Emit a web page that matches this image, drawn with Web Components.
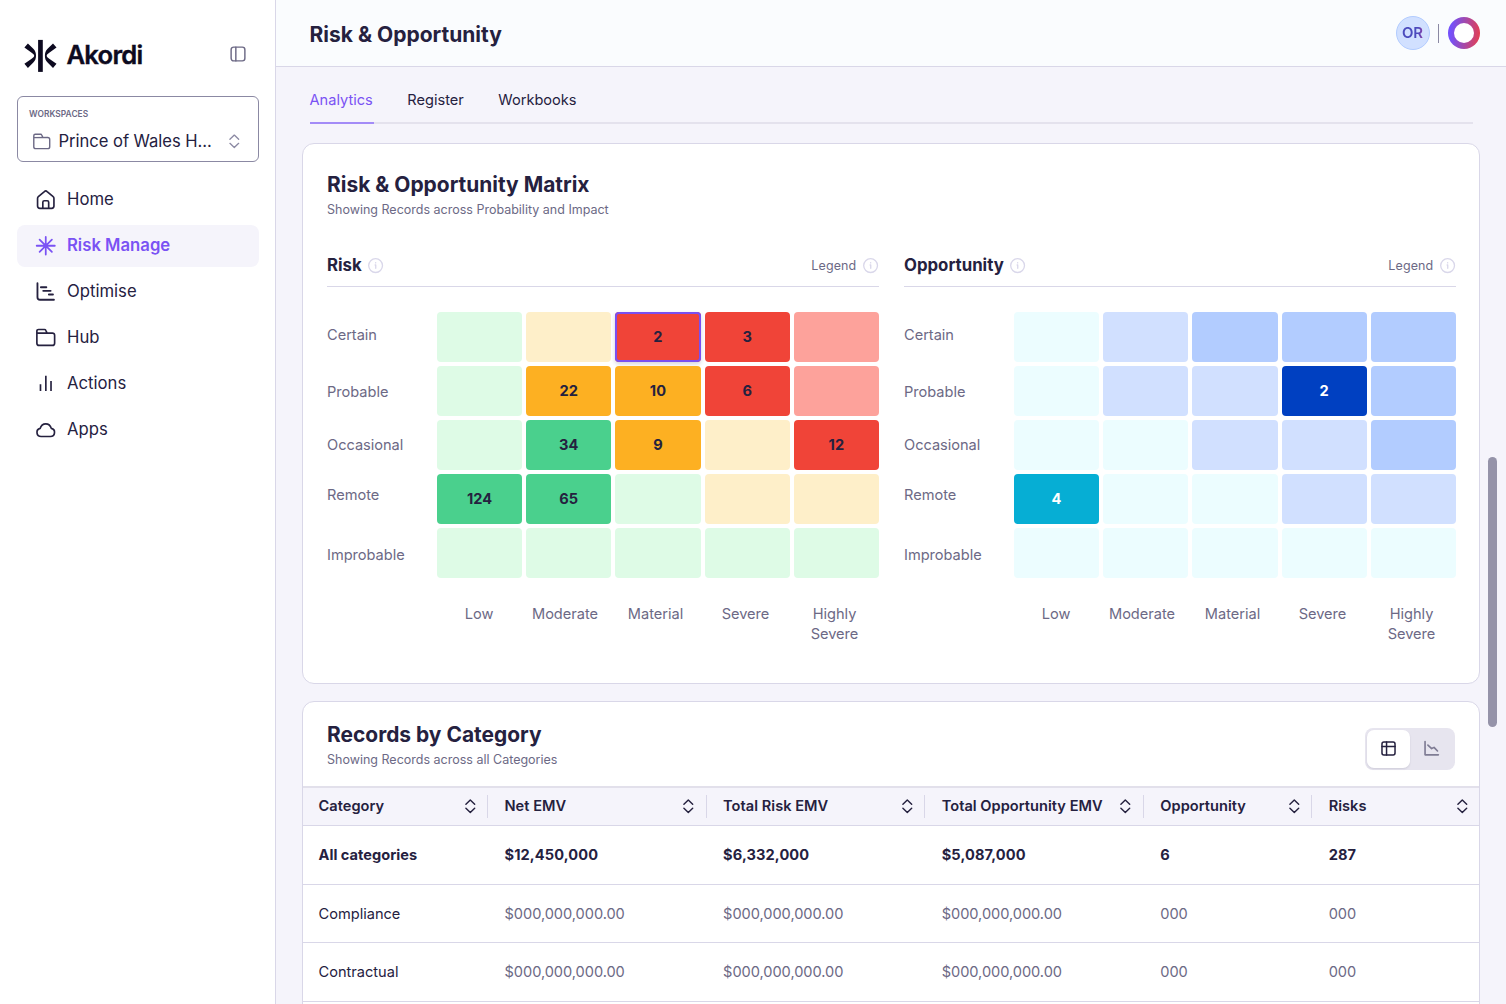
<!DOCTYPE html>
<html lang="en">
<head>
<meta charset="utf-8">
<title>Risk &amp; Opportunity</title>
<style>
    html, body {
        margin: 0;
        height: 100%;
        overflow: hidden;
    }
    body {
        --ink: #25213f;
        --muted: #6c6985;
        --line: #d9d7e8;
        --surface: #f5f4fb;
        --accent: #7a52f4;
        font-family: Inter, "Liberation Sans", sans-serif;
        font-size: 14.6px;
        color: var(--ink);
        background: var(--surface);
    }
</style>
</head>
<body>
<ak-app>
    <ak-sidebar slot="sidebar">
        <ak-workspace label="WORKSPACES">Prince of Wales H...</ak-workspace>
        <ak-nav-item icon="home">Home</ak-nav-item>
        <ak-nav-item icon="spark" active>Risk Manage</ak-nav-item>
        <ak-nav-item icon="gantt">Optimise</ak-nav-item>
        <ak-nav-item icon="folder">Hub</ak-nav-item>
        <ak-nav-item icon="bars">Actions</ak-nav-item>
        <ak-nav-item icon="cloud">Apps</ak-nav-item>
    </ak-sidebar>
    <ak-topbar slot="topbar" initials="OR">Risk &amp; Opportunity</ak-topbar>
    <ak-tabs>
        <ak-tab active>Analytics</ak-tab>
        <ak-tab>Register</ak-tab>
        <ak-tab>Workbooks</ak-tab>
    </ak-tabs>
    <ak-card class="matrix" heading="Risk &amp; Opportunity Matrix" sub="Showing Records across Probability and Impact">
        <ak-matrix heading="Risk" kind="risk"></ak-matrix>
        <ak-matrix heading="Opportunity" kind="opportunity"></ak-matrix>
    </ak-card>
    <ak-card class="records" heading="Records by Category" sub="Showing Records across all Categories" flush>
        <ak-view-toggle slot="action"></ak-view-toggle>
        <ak-table></ak-table>
    </ak-card>
</ak-app>

<script>
class BaseElement extends HTMLElement {
    constructor() {
        super();
        this.attachShadow({ mode: "open" });
    }

    connectedCallback() {
        this.shadowRoot.innerHTML = this.render();
    }
}

const ICONS = {
    home: `<path d="M1.6 8.6c0-.7.3-1.3.8-1.7L8.6 1.6a2.1 2.1 0 0 1 2.8 0l6.200 5.300c.5.4.8 1 .8 1.700v7.900c0 1.400-.9 2.300-2.300 2.300H3.900c-1.400 0-2.300-.9-2.300-2.300z"/><path d="M7 18.700v-6.200c0-.9.6-1.500 1.500-1.500h3c.9 0 1.500.6 1.500 1.500v6.200"/>`,
    spark: `<path d="M10 .9v18.2M.7 10h18.6M3.7 3.7l12.6 12.6M16.3 3.7 3.7 16.3" stroke-width="1.8"/>`,
    gantt: `<path d="M1.5 1.2v14.4a2.6 2.6 0 0 0 2.6 2.6h14.3M5 5.4h5.6M7.4 9.1h7.6M13.2 12.8h4.2" stroke-width="1.9"/>`,
    folder: `<path d="M.9 5.8V3.2c0-1 .7-1.7 1.7-1.7h6.1c.6 0 1.1.3 1.3.8l1 2.2M.9 5.3v10.3c0 1.4.9 2.3 2.3 2.3h13.6c1.4 0 2.3-.9 2.3-2.3V7.5c0-1.4-.9-2.3-2.3-2.3z"/>`,
    bars: `<path d="M4.6 10.5v7M10.1 1.8v15.7M15.4 7.1v10.4" stroke-linecap="butt"/>`,
    cloud: `<path d="M5.2 16.9a4.2 4.2 0 0 1-.9-8.3C5.1 5.8 7.3 3.9 10 3.9s4.9 1.9 5.7 4.7a4.2 4.2 0 0 1-.9 8.3z"/>`,
    panel: `<rect x="1.4" y="1.4" width="17.2" height="17.2" rx="3.2"/><path d="M7.3 1.4v17.2"/>`,
    sort: `<path d="m4 7.2 6-5.7 6 5.7M4 12.8l6 5.7 6-5.7"/>`,
    info: `<circle cx="10" cy="10" r="9.1"/><path d="M9.4 9.2h.8v4.3M10.1 6v.5"/>`,
    grid: `<rect x="1.3" y="1.3" width="17.4" height="17.4" rx="2.6"/><path d="M1.3 7.2h17.4M7.4 1.3v17.4"/>`,
    trend: `<path d="M1.4.8v17.6h17.8M5.2 5.4l5 4.7 3.2-1.6 4.6 4.8"/>`
};

class AkIcon extends BaseElement {
    render() {
        const size = this.getAttribute("size") || 20;
        const weight = this.getAttribute("weight") || 1.6;
        return `
        <style>
          :host { display: block; flex: none; width: ${size}px; height: ${size}px; }
          svg { display: block; overflow: visible; }
        </style>
        <svg width="${size}" height="${size}" viewBox="0 0 20 20" fill="none" stroke="currentColor"
             stroke-width="${weight}" stroke-linecap="round" stroke-linejoin="round">${ICONS[this.getAttribute("name")]}</svg>`;
    }
}

class AkApp extends BaseElement {
    render() {
        return `
        <style>
          :host { display: grid; grid-template-columns: 276px 1fr; height: 100vh; }
          .main { display: flex; flex-direction: column; min-width: 0; overflow: hidden; }
          .scroll { display: flex; flex: 1; min-height: 0; overflow: hidden; }
          .content {
            box-sizing: border-box;
            width: 1204.5px;
            padding-left: 26px;
          }
          .thumb {
            width: 9px;
            height: 270px;
            margin: 390px 0 0 7.5px;
            border-radius: 5px;
            background: #9593a9;
          }
        </style>
        <slot name="sidebar"></slot>
        <div class="main">
          <slot name="topbar"></slot>
          <div class="scroll">
            <div class="content"><slot></slot></div>
            <div class="thumb"></div>
          </div>
        </div>`;
    }
}

class AkSidebar extends BaseElement {
    render() {
        return `
        <style>
          :host {
            display: block;
            box-sizing: border-box;
            padding: 39px 16px 0;
            background: #fff;
            border-right: 1px solid var(--line);
          }
          .brand {
            display: flex;
            align-items: center;
            height: 33px;
            margin-bottom: 24px;
            padding: 0 12.8px 0 8px;
            color: #0d0a20;
          }
          .name {
            flex: 1;
            margin: -3px 0 0 9.5px;
            font-size: 25.6px;
            font-weight: 600;
            letter-spacing: -0.75px;
            -webkit-text-stroke: 0.4px;
          }
          ak-icon { color: #6c6985; margin-top: -3px; }
          nav { display: flex; flex-direction: column; gap: 4px; }
        </style>
        <div class="brand">
          <svg width="33" height="33" viewBox="0 0 33 33" fill="currentColor">
            <path d="M14.1.9h4.7v32h-4.7z"/>
            <path id="arm" d="M3.900 4.500 9.300 9.800C11.300 11.800 12 14.200 12 16.700S11.300 21.600 9.300 23.600L3.900 28.900.4 24.800 7.300 19.900C9.300 18.500 10.200 17.800 10.200 16.700S9.300 14.900 7.300 13.500L.4 8.600z"/>
            <use href="#arm" transform="matrix(-1 0 0 1 32.900 0)"/>
          </svg>
          <span class="name">Akordi</span>
          <ak-icon name="panel" size="16" weight="1.8"></ak-icon>
        </div>
        <nav><slot></slot></nav>`;
    }
}

class AkWorkspace extends BaseElement {
    render() {
        return `
        <style>
          :host {
            display: block;
            box-sizing: border-box;
            height: 66px;
            margin: 0 0 13px 0.5px;
            padding: 11.5px 16px 0 11.5px;
            border: 1px solid #8b89a3;
            border-radius: 6px;
          }
          .label { font-size: 8.4px; line-height: 10px; font-weight: 600; letter-spacing: 0.05px; color: var(--muted); }
          .row { display: flex; align-items: center; margin-top: 11px; padding-left: 3.5px; line-height: 24px; font-size: 16.6px; }
          .row span { flex: 1; margin: -1px 0 0 8.5px; letter-spacing: -0.04px; }
          .folder { color: #6c6985; margin-top: 1px; }
          .sort { color: #8b89a3; margin-top: 1px; }
        </style>
        <div class="label">${this.getAttribute("label")}</div>
        <div class="row">
          <ak-icon class="folder" name="folder" size="17.5" weight="1.6"></ak-icon>
          <span><slot></slot></span>
          <ak-icon class="sort" name="sort" size="14.6" weight="1.8"></ak-icon>
        </div>`;
    }
}

class AkNavItem extends BaseElement {
    render() {
        return `
        <style>
          :host {
            display: flex;
            align-items: center;
            gap: 11.2px;
            height: 42px;
            margin-left: 0.5px;
            padding-left: 19.8px;
            border-radius: 8px;
            font-size: 16.7px;
          }
          :host([active]) { background: var(--surface); color: var(--accent); font-weight: 600; }
          span { margin-top: -3px; }
        </style>
        <ak-icon name="${this.getAttribute("icon")}" size="19.5" weight="1.7"></ak-icon>
        <span><slot></slot></span>`;
    }
}

class AkTopbar extends BaseElement {
    render() {
        return `
        <style>
          :host {
            display: flex;
            align-items: center;
            box-sizing: border-box;
            flex: none;
            height: 67px;
            padding: 0 26px 0 33.5px;
            background: #fafcfe;
            border-bottom: 1px solid var(--line);
          }
          h1 { flex: 1; margin: 2px 0 0; font-size: 21px; font-weight: 700; }
          .avatar {
            display: grid;
            place-items: center;
            box-sizing: border-box;
            width: 34px;
            height: 34px;
            margin-top: 0.5px;
            border: 1px solid #b2ccff;
            border-radius: 50%;
            background: #d1e0ff;
            font-size: 14.9px;
            font-weight: 600;
          }
          .avatar span {
            color: transparent;
            background: linear-gradient(90deg, #4b4bbd 75%, #8a3fa8);
            background-clip: text;
          }
          .rule { width: 1px; height: 19px; margin: 0 9.5px 0 8px; background: #8b89a3; }
          .ring {
            box-sizing: border-box;
            width: 32px;
            height: 32px;
            margin-top: 0.5px;
            padding: 6px;
            border-radius: 50%;
            background: linear-gradient(95deg, #7450fa 12%, #9a4bb8 45%, #e23f55 95%);
          }
          .ring::before { content: ""; display: block; height: 20px; border-radius: 50%; background: #fff; }
        </style>
        <h1><slot></slot></h1>
        <div class="avatar"><span>${this.getAttribute("initials")}</span></div>
        <div class="rule"></div>
        <div class="ring"></div>`;
    }
}

class AkTabs extends BaseElement {
    render() {
        return `
        <style>
          :host {
            display: flex;
            gap: 33px;
            height: 55px;
            margin: 0 7.5px 19px;
            border-bottom: 2px solid #e4e2ed;
          }
        </style>
        <slot></slot>`;
    }
}

class AkTab extends BaseElement {
    render() {
        return `
        <style>
          :host { display: block; height: 55px; padding-right: 1.5px; line-height: 66px; }
          :host([active]) { color: var(--accent); border-bottom: 2px solid #a38bf7; }
        </style>
        <slot></slot>`;
    }
}

class AkCard extends BaseElement {
    render() {
        return `
        <style>
          :host {
            display: block;
            box-sizing: border-box;
            width: 1178px;
            background: #fff;
            border: 1px solid var(--line);
            border-radius: 12px;
          }
          :host(.matrix) { height: 541px; margin-bottom: 17px; }
          :host(.records) { height: 420px; overflow: hidden; }
          header { display: flex; justify-content: space-between; padding: 28px 24px 0; }
          :host([flush]) header { padding-top: 20px; height: 64px; }
          h2 { margin: 0; font-size: 20.95px; line-height: 26px; font-weight: 700; }
          p { margin: 3px 0 0; font-size: 12.5px; line-height: 18px; color: var(--muted); }
          .body { display: grid; grid-template-columns: 552px 552px; gap: 25px; padding: 26px 24px 0; }
          :host([flush]) .body { display: block; padding: 0; }
        </style>
        <header>
          <div>
            <h2>${this.getAttribute("heading").replace("&", "&amp;")}</h2>
            <p>${this.getAttribute("sub")}</p>
          </div>
          <slot name="action"></slot>
        </header>
        <div class="body"><slot></slot></div>`;
    }
}

// lower case letters are the empty tints, [letter, n] is a filled cell with its count
const MATRIX = {
    risk: {
        colors: { g: "#defbe6", y: "#feefc9", r: "#fda29b", G: "#4ad08d", Y: "#fdb022", R: "#f04438" },
        rows: [
            ["g", "y", ["R", 2, "selected"], ["R", 3], "r"],
            ["g", ["Y", 22], ["Y", 10], ["R", 6], "r"],
            ["g", ["G", 34], ["Y", 9], "y", ["R", 12]],
            [["G", 124], ["G", 65], "g", "y", "y"],
            ["g", "g", "g", "g", "g"]
        ]
    },
    opportunity: {
        colors: { c: "#ecfdff", b: "#d1e0ff", d: "#b2ccff", B: "#0040c1", C: "#06aed4" },
        rows: [
            ["c", "b", "d", "d", "d"],
            ["c", "b", "b", ["B", 2, "light"], "d"],
            ["c", "c", "b", "b", "d"],
            [["C", 4, "light"], "c", "c", "b", "b"],
            ["c", "c", "c", "c", "c"]
        ]
    }
};
const PROBABILITY = ["Certain", "Probable", "Occasional", "Remote", "Improbable"];
const IMPACT = ["Low", "Moderate", "Material", "Severe", "Highly<br>Severe"];

class AkMatrix extends BaseElement {
    renderCell(cell, colors) {
        const [key, count = "", state = ""] = [].concat(cell);
        return `<div class="cell ${state}" style="background:${colors[key]}">${count}</div>`;
    }

    render() {
        const { colors, rows } = MATRIX[this.getAttribute("kind")];
        return `
        <style>
          :host { display: block; color: var(--muted); }
          .head {
            display: flex;
            align-items: center;
            gap: 6.5px;
            box-sizing: border-box;
            height: 42px;
            padding: 0 1px 2px 0;
            border-bottom: 1.5px solid var(--line);
          }
          h3 { flex: none; margin: 0; font-size: 16.8px; font-weight: 700; color: var(--ink); }
          .legend { margin: 1px 0 0 auto; font-size: 12.5px; letter-spacing: 0.1px; }
          ak-icon { color: #d9d7ea; margin-top: 2px; }
          .plot { display: grid; grid-template-columns: 110px 442px; padding-top: 25px; }
          .rows {
            display: grid;
            grid-template-rows: 46px 68px 38px 62px 58px;
            align-items: center;
            height: 266px;
            letter-spacing: -0.02px;
          }
          .cells {
            display: grid;
            grid-template-columns: repeat(5, 1fr);
            grid-auto-rows: 50px;
            gap: 4px;
          }
          .cell {
            display: grid;
            place-items: center;
            border-radius: 4px;
            font-weight: 700;
            letter-spacing: 0.1px;
            color: var(--ink);
          }
          .cell.light { color: #fff; }
          .cell.selected { box-shadow: inset 0 0 0 2px #7a4ff0, 0 2px 4px rgba(37, 33, 63, 0.2); }
          .cols {
            grid-column: 2;
            display: grid;
            grid-template-columns: 84px 88px 93px 87px 91px;
            margin-top: 26px;
            line-height: 20px;
            text-align: center;
            letter-spacing: -0.02px;
          }
        </style>
        <div class="head">
          <h3>${this.getAttribute("heading")}</h3>
          <ak-icon name="info" size="15.2" weight="1.7"></ak-icon>
          <span class="legend">Legend</span>
          <ak-icon name="info" size="15.2" weight="1.7"></ak-icon>
        </div>
        <div class="plot">
          <div class="rows">${PROBABILITY.map((p) => `<span>${p}</span>`).join("")}</div>
          <div class="cells">${rows.flat().map((c) => this.renderCell(c, colors)).join("")}</div>
          <div class="cols">${IMPACT.map((i) => `<span>${i}</span>`).join("")}</div>
        </div>`;
    }
}

class AkViewToggle extends BaseElement {
    render() {
        return `
        <style>
          :host {
            display: flex;
            box-sizing: border-box;
            width: 90px;
            height: 42px;
            margin-top: 6px;
            padding: 2px;
            border-radius: 8px;
            background: #e7e5ef;
          }
          div { display: grid; place-items: center; box-sizing: border-box; width: 44px; padding: 0 0 1px 1px; color: #7f7c94; }
          .on {
            width: 43px;
            border-radius: 7px;
            background: #fff;
            color: var(--ink);
            box-shadow: 0 1px 2px rgba(37, 33, 63, 0.12);
          }
        </style>
        <div class="on"><ak-icon name="grid" size="15" weight="2"></ak-icon></div>
        <div><ak-icon name="trend" size="15" weight="2.2"></ak-icon></div>`;
    }
}

const COLUMNS = ["Category", "Net EMV", "Total Risk EMV", "Total Opportunity EMV", "Opportunity", "Risks"];
const EMPTY = ["$000,000,000.00", "$000,000,000.00", "$000,000,000.00", "000", "000"];
const RECORDS = [
    ["All categories", "$12,450,000", "$6,332,000", "$5,087,000", "6", "287"],
    ["Compliance", ...EMPTY],
    ["Contractual", ...EMPTY],
    ["", "", "", "", "", ""]
];

class AkTable extends BaseElement {
    render() {
        return `
        <style>
          :host { display: block; }
          .row {
            display: grid;
            grid-template-columns: 185px 218.6px 218.6px 218.6px 168.4px 1fr;
            align-items: center;
            box-sizing: border-box;
            height: 58.5px;
            padding-top: 0.5px;
            border-bottom: 1px solid var(--line);
          }
          .row > * { padding-left: 15.5px; }
          .row > * + * { padding-left: 16.5px; }
          .cell + .cell { color: var(--muted); letter-spacing: -0.05px; }
          .total { height: 59px; padding-top: 0; }
          .total .cell { font-weight: 700; color: var(--ink); letter-spacing: 0.02px; }
          .total .cell + .cell { letter-spacing: 0.1px; }
          .header {
            height: 39.5px;
            padding-top: 0;
            background: var(--surface);
            border-top: 2px solid #e2e0eb;
            font-weight: 600;
            letter-spacing: 0.03px;
          }
          .th {
            display: flex;
            align-items: center;
            justify-content: space-between;
            box-sizing: border-box;
            height: 23px;
            padding-right: 9.8px;
            border-right: 1px solid var(--line);
          }
          .th:last-child { padding-right: 8px; border-right-color: transparent; }
        </style>
        <div class="row header">
          ${COLUMNS.map((c) => `<div class="th">${c}<ak-icon name="sort" size="14.6" weight="2"></ak-icon></div>`).join("")}
        </div>
        ${RECORDS.map((r, i) => `<div class="row ${i === 0 ? "total" : ""}">${r.map((v) => `<div class="cell">${v}</div>`).join("")}</div>`).join("")}`;
    }
}

customElements.define("ak-icon", AkIcon);
customElements.define("ak-app", AkApp);
customElements.define("ak-sidebar", AkSidebar);
customElements.define("ak-workspace", AkWorkspace);
customElements.define("ak-nav-item", AkNavItem);
customElements.define("ak-topbar", AkTopbar);
customElements.define("ak-tabs", AkTabs);
customElements.define("ak-tab", AkTab);
customElements.define("ak-card", AkCard);
customElements.define("ak-matrix", AkMatrix);
customElements.define("ak-view-toggle", AkViewToggle);
customElements.define("ak-table", AkTable);
</script>
</body>
</html>
